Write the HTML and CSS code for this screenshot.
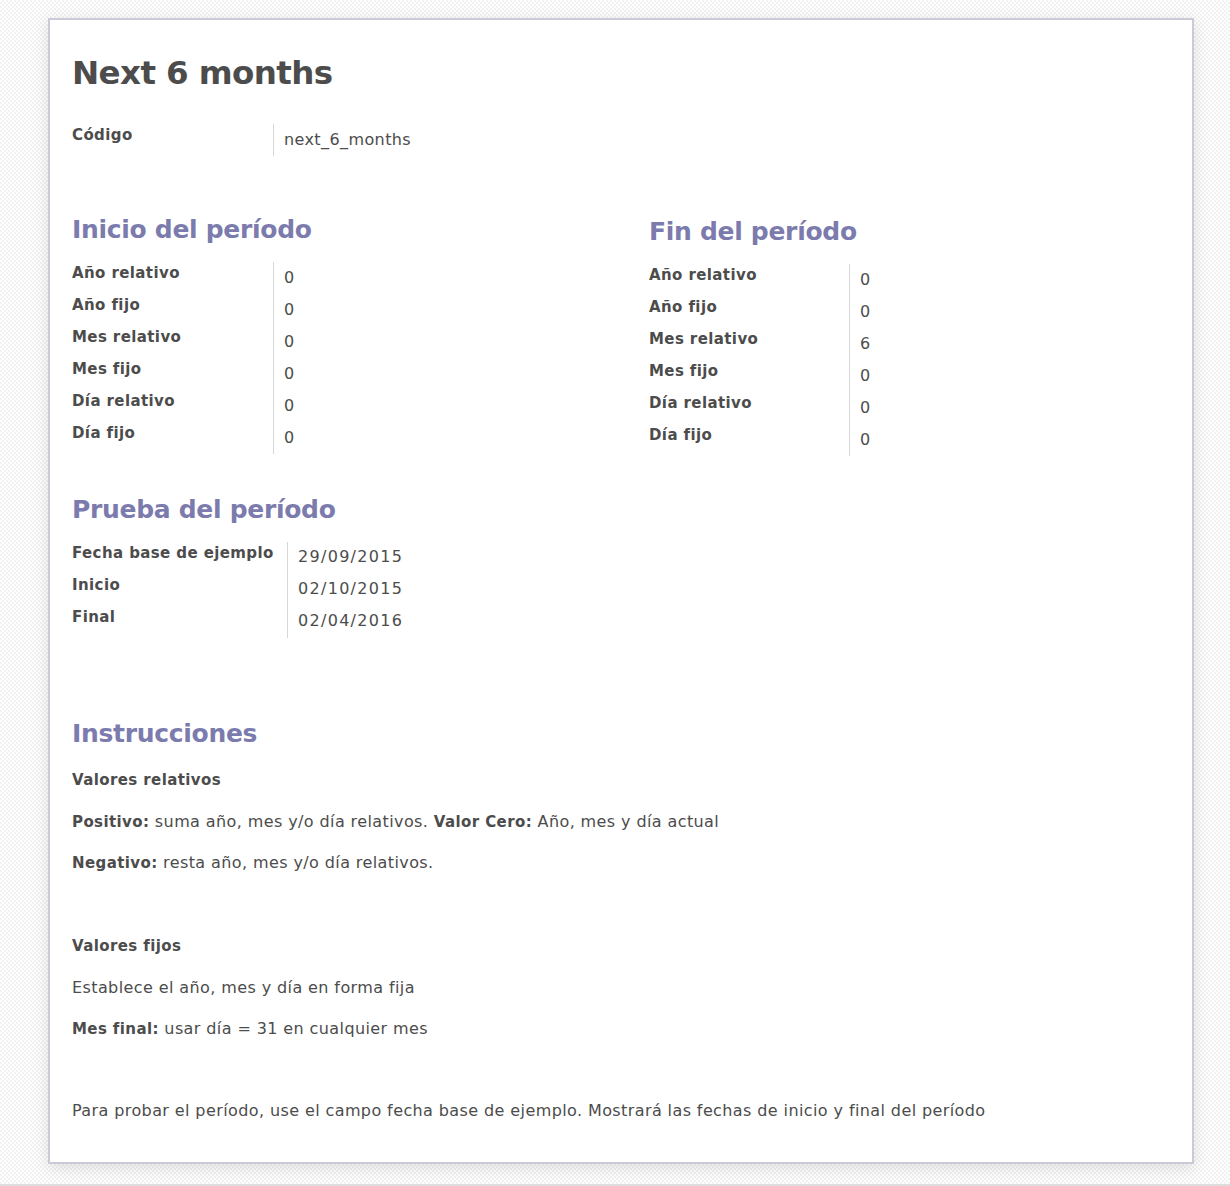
FILE: index.html
```html
<!DOCTYPE html>
<html lang="es">
<head>
<meta charset="utf-8">
<title>Next 6 months</title>
<link rel="stylesheet" href="styles.css">
</head>
<body>
<div class="page">
  <div class="sheet">
    <h1 class="title">Next 6 months</h1>
    <div class="fields code">
      <div class="lbl">Código</div><div class="val">next_6_months</div>
    </div>

    <div class="cols">
      <div class="col col-left">
        <h2 class="sep">Inicio del período</h2>
        <div class="fields">
          <div class="lbl">Año relativo</div><div class="val">0</div>
          <div class="lbl">Año fijo</div><div class="val">0</div>
          <div class="lbl">Mes relativo</div><div class="val">0</div>
          <div class="lbl">Mes fijo</div><div class="val">0</div>
          <div class="lbl">Día relativo</div><div class="val">0</div>
          <div class="lbl">Día fijo</div><div class="val">0</div>
        </div>
      </div>
      <div class="col col-right">
        <h2 class="sep">Fin del período</h2>
        <div class="fields narrow">
          <div class="lbl">Año relativo</div><div class="val">0</div>
          <div class="lbl">Año fijo</div><div class="val">0</div>
          <div class="lbl">Mes relativo</div><div class="val">6</div>
          <div class="lbl">Mes fijo</div><div class="val">0</div>
          <div class="lbl">Día relativo</div><div class="val">0</div>
          <div class="lbl">Día fijo</div><div class="val">0</div>
        </div>
      </div>
    </div>

    <h2 class="sep test-title">Prueba del período</h2>
    <div class="fields test">
      <div class="lbl">Fecha base de ejemplo</div><div class="val date">29/09/2015</div>
      <div class="lbl">Inicio</div><div class="val date">02/10/2015</div>
      <div class="lbl">Final</div><div class="val date">02/04/2016</div>
    </div>

    <h2 class="sep instr-title">Instrucciones</h2>
    <div class="instr">
      <p class="sub">Valores relativos</p>
      <p><b>Positivo:</b> suma año, mes y/o día relativos. <b>Valor Cero:</b> Año, mes y día actual</p>
      <p><b>Negativo:</b> resta año, mes y/o día relativos.</p>
      <p class="sub gap">Valores fijos</p>
      <p>Establece el año, mes y día en forma fija</p>
      <p><b>Mes final:</b> usar día = 31 en cualquier mes</p>
      <p class="gap last">Para probar el período, use el campo fecha base de ejemplo. Mostrará las fechas de inicio y final del período</p>
    </div>
  </div>
</div>
</body>
</html>
```

FILE: styles.css
```css
html, body {
  margin: 0;
  padding: 0;
}
body {
  font-family: "DejaVu Sans", Verdana, sans-serif;
  font-size: 16px;
  letter-spacing: 0.4px;
  color: #4c4c4c;
  background-color: #ffffff;
  background-image: repeating-conic-gradient(#f2f2f2 0% 25%, #ffffff 0% 50%);
  background-size: 4px 4px;
  height: 1186px;
  box-sizing: border-box;
  border-bottom: 2px solid #dedede;
}
b {
  font-size: 15px;
}
.page {
  padding: 18px 0 0 48px;
}
.sheet {
  width: 1098px;
  background: #ffffff;
  border: 2px solid #cbcbd8;
  box-shadow: 0 4px 16px rgba(0, 0, 0, 0.12);
  padding: 31px 22px 31px 22px;
}
.title {
  margin: 0 0 29px 0;
  font-size: 32.5px;
  letter-spacing: -0.6px;
  font-weight: bold;
  color: #4c4c4c;
  line-height: 44px;
}
.fields {
  display: grid;
  grid-template-columns: 201px max-content;
  grid-auto-rows: 32px;
}
.fields .lbl {
  font-size: 15px;
  font-weight: bold;
  line-height: 22px;
  white-space: nowrap;
}
.fields .val {
  border-left: 1px solid #d8d8d8;
  padding: 5px 0 0 10px;
  line-height: 22px;
}
.fields.narrow {
  grid-template-columns: 200px max-content;
}
.fields.test {
  grid-template-columns: 215px max-content;
}
.fields.test .val {
  padding-top: 4px;
}
.val.date {
  letter-spacing: 1.3px;
}
.cols {
  display: flex;
  margin-top: 58px;
}
.col-left {
  flex: 0 0 577px;
}
.col-right {
  flex: 1 1 auto;
  padding-top: 2px;
}
.sep {
  margin: 0 0 16px 0;
  font-size: 25px;
  letter-spacing: -0.3px;
  font-weight: bold;
  color: #7c7bad;
  line-height: 32px;
}
.test-title {
  margin-top: 38px;
  margin-bottom: 16px;
}
.instr-title {
  margin-top: 80px;
  margin-bottom: 10px;
}
.instr p {
  margin: 0;
  height: 41px;
  line-height: 41px;
}
.instr .sub {
  font-size: 15px;
  font-weight: bold;
}
.instr .gap {
  margin-top: 43px;
}
.instr .last {
  margin-top: 41px;
}
```
